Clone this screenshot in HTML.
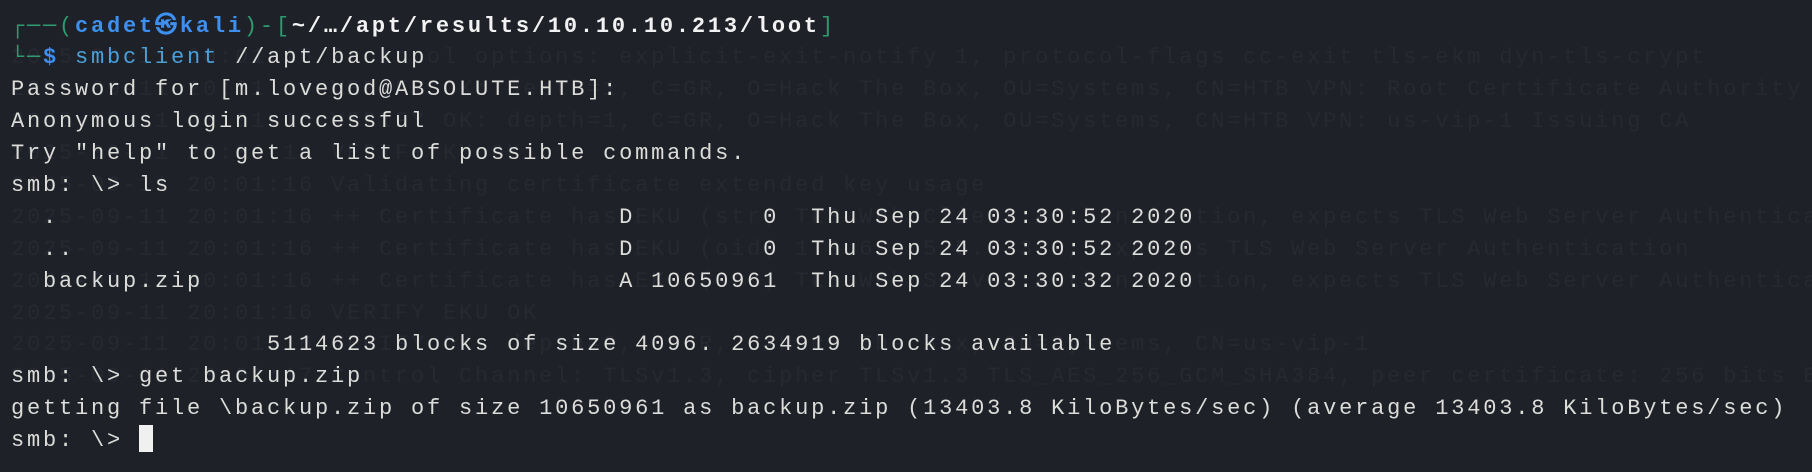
<!DOCTYPE html>
<html><head><meta charset="utf-8"><style>
html,body{margin:0;padding:0;}
body{width:1812px;height:472px;background:#1f2129;overflow:hidden;position:relative;font-family:"Liberation Mono","DejaVu Sans Mono",monospace;}
.l{position:absolute;left:11px;font-size:22px;letter-spacing:2.8px;white-space:pre;line-height:32px;height:32px;color:#dcdcd8;}
.g{color:#262932;}
.gr{color:#2f9a6f;}
.bl{color:#3d8ff0;font-weight:bold;}
.w{color:#f2f2f2;font-weight:bold;}
.cy{color:#4aa0d8;}
.cur{display:inline-block;width:14px;height:27px;background:#f0f0f0;vertical-align:-6px;}
</style></head><body>
<div class="l g" style="top:42px">2025-09-11 20:01:16 Protocol options: explicit-exit-notify 1, protocol-flags cc-exit tls-ekm dyn-tls-crypt</div>
<div class="l g" style="top:74px">2025-09-11 20:01:16 VERIFY OK: depth=1, C=GR, O=Hack The Box, OU=Systems, CN=HTB VPN: Root Certificate Authority</div>
<div class="l g" style="top:106px">2025-09-11 20:01:16 VERIFY OK: depth=1, C=GR, O=Hack The Box, OU=Systems, CN=HTB VPN: us-vip-1 Issuing CA</div>
<div class="l g" style="top:138px">2025-09-11 20:01:16 VERIFY KU OK</div>
<div class="l g" style="top:170px">2025-09-11 20:01:16 Validating certificate extended key usage</div>
<div class="l g" style="top:202px">2025-09-11 20:01:16 ++ Certificate has EKU (str) TLS Web Client Authentication, expects TLS Web Server Authentication</div>
<div class="l g" style="top:234px">2025-09-11 20:01:16 ++ Certificate has EKU (oid) 1.3.6.1.5.5.7.3.2, expects TLS Web Server Authentication</div>
<div class="l g" style="top:266px">2025-09-11 20:01:16 ++ Certificate has EKU (str) TLS Web Server Authentication, expects TLS Web Server Authentication</div>
<div class="l g" style="top:298px">2025-09-11 20:01:16 VERIFY EKU OK</div>
<div class="l g" style="top:329px">2025-09-11 20:01:16 VERIFY OK: depth=0, C=GR, O=Hack The Box, OU=Systems, CN=us-vip-1</div>
<div class="l g" style="top:361px">2025-09-11 20:01:17 Control Channel: TLSv1.3, cipher TLSv1.3 TLS_AES_256_GCM_SHA384, peer certificate: 256 bits E</div>

<div class="l" style="top:11px"><span class="gr">┌──(</span><span class="bl">cadet㉿kali</span><span class="gr">)-[</span><span class="w">~/…/apt/results/10.10.10.213/loot</span><span class="gr">]</span></div>
<div class="l" style="top:42px;background:transparent"><span class="gr">└─</span><span class="bl">$</span> <span class="cy">smbclient</span> //apt/backup</div>
<div class="l" style="top:74px">Password for [m.lovegod@ABSOLUTE.HTB]:</div>
<div class="l" style="top:106px">Anonymous login successful</div>
<div class="l" style="top:138px">Try "help" to get a list of possible commands.</div>
<div class="l" style="top:170px">smb: \&gt; ls</div>
<div class="l" style="top:202px">  .                                   D        0  Thu Sep 24 03:30:52 2020</div>
<div class="l" style="top:234px">  ..                                  D        0  Thu Sep 24 03:30:52 2020</div>
<div class="l" style="top:266px">  backup.zip                          A 10650961  Thu Sep 24 03:30:32 2020</div>
<div class="l" style="top:329px">                5114623 blocks of size 4096. 2634919 blocks available</div>
<div class="l" style="top:361px">smb: \&gt; get backup.zip</div>
<div class="l" style="top:393px">getting file \backup.zip of size 10650961 as backup.zip (13403.8 KiloBytes/sec) (average 13403.8 KiloBytes/sec)</div>
<div class="l" style="top:425px">smb: \&gt; <span class="cur"></span></div>
</body></html>
